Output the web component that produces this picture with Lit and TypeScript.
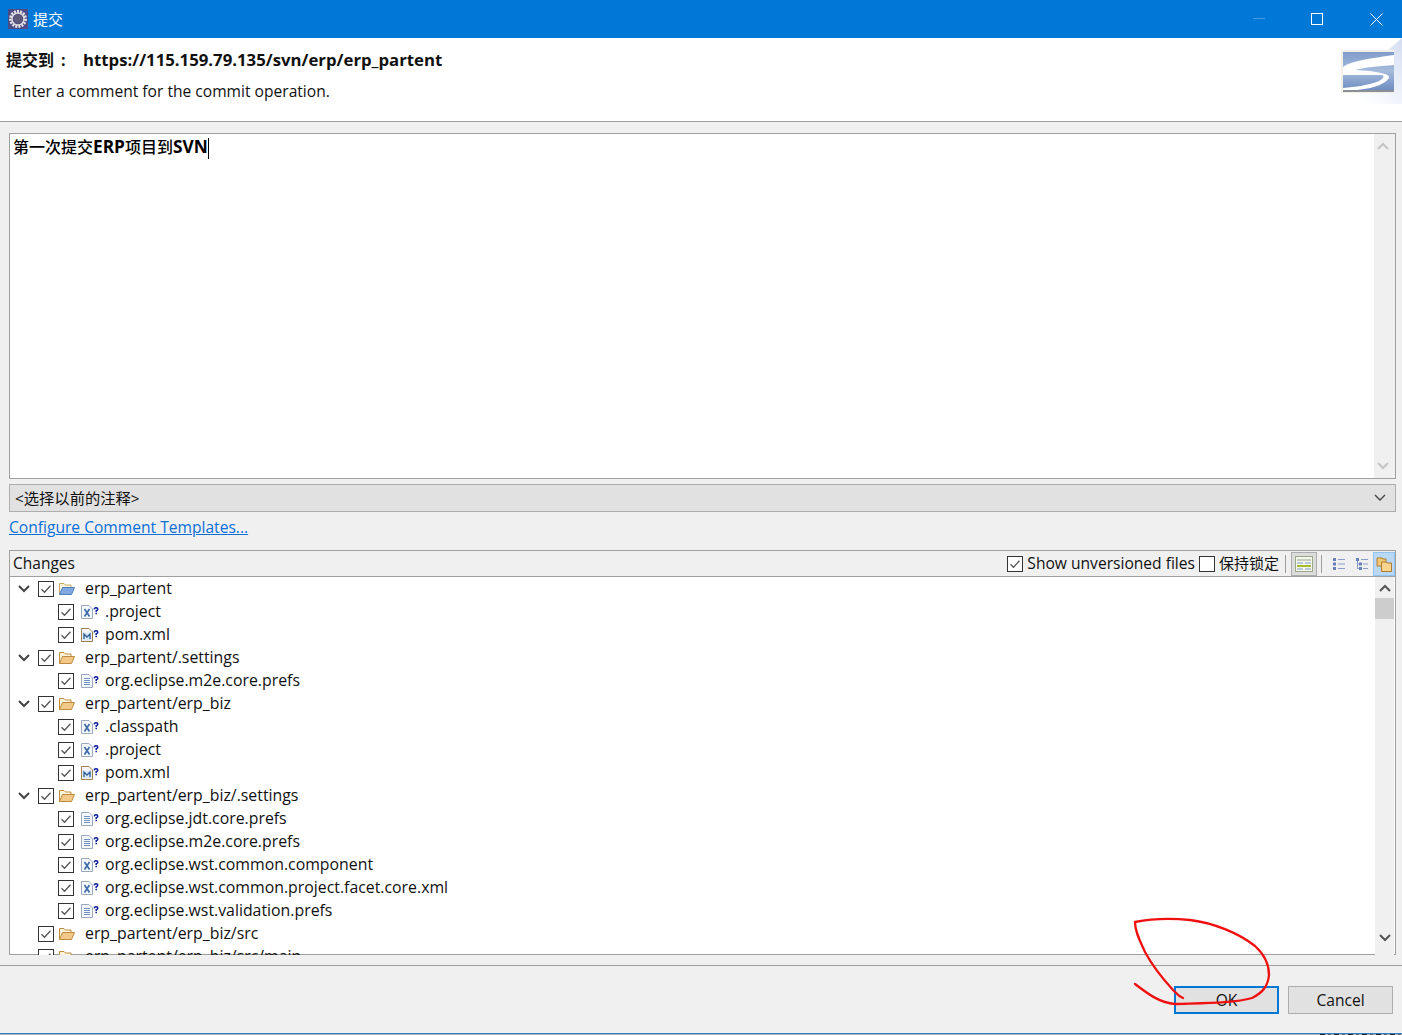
import { LitElement, html, css, svg } from 'lit';
import { customElement } from 'lit/decorators.js';

type Row = { name: string; kind: 'folder' | 'root' | 'x' | 'm' | 'doc'; open?: boolean };

const rows: Row[] = [
  { name: 'erp_partent', kind: 'root', open: true },
  { name: '.project', kind: 'x' },
  { name: 'pom.xml', kind: 'm' },
  { name: 'erp_partent/.settings', kind: 'folder', open: true },
  { name: 'org.eclipse.m2e.core.prefs', kind: 'doc' },
  { name: 'erp_partent/erp_biz', kind: 'folder', open: true },
  { name: '.classpath', kind: 'x' },
  { name: '.project', kind: 'x' },
  { name: 'pom.xml', kind: 'm' },
  { name: 'erp_partent/erp_biz/.settings', kind: 'folder', open: true },
  { name: 'org.eclipse.jdt.core.prefs', kind: 'doc' },
  { name: 'org.eclipse.m2e.core.prefs', kind: 'doc' },
  { name: 'org.eclipse.wst.common.component', kind: 'x' },
  { name: 'org.eclipse.wst.common.project.facet.core.xml', kind: 'x' },
  { name: 'org.eclipse.wst.validation.prefs', kind: 'doc' },
  { name: 'erp_partent/erp_biz/src', kind: 'folder' },
  { name: 'erp_partent/erp_biz/src/main', kind: 'folder' },
];

const checkbox = (checked = true) => html`
  <svg class="check" width="16" height="16" viewBox="0 0 16 16">
    <rect x="0.5" y="0.5" width="15" height="15" fill="#fff" stroke="#333" />
    ${checked ? svg`<path d="M3.5 8.2 L6.5 11.2 L12.5 4.8" fill="none" stroke="#555" stroke-width="1.3" />` : ''}
  </svg>
`;

const chevron = (up: boolean, color: string, weight = 2) => html`
  <svg width="12" height="8" viewBox="0 0 12 8">
    <path d=${up ? 'M1 7 L6 2 L11 7' : 'M1 1 L6 6 L11 1'} fill="none" stroke=${color} stroke-width=${weight} />
  </svg>
`;

const folderIcon = (blue: boolean) => {
  const edge = blue ? '#4f7fc0' : '#c08a3e';
  const front = blue ? '#7fa8e0' : '#f3c98a';
  return html`
    <svg width="18" height="14" viewBox="0 0 18 14">
      <path d="M1.5 12.5 V1.5 H6 L7.5 3 H13 V5.5" fill="#fdf3d8" stroke=${blue ? '#c8a860' : edge} />
      <path d="M1.5 12.5 L4.5 5.5 H16.5 L13.5 12.5 Z" fill=${front} stroke=${edge} />
    </svg>
  `;
};

const fileIcon = (kind: string) => {
  const edge = kind === 'm' ? '#a08050' : '#9aa8c0';
  let inner = svg`
    <path d="M3 4.5 H9 M3 6.5 H9 M3 8.5 H9 M3 10.5 H9" stroke="#6f8fc0" />
  `;
  if (kind === 'x') {
    inner = svg`<path d="M3.5 4 L8.5 11.5 M8.5 4 L3.5 11.5" stroke="#3f6ea8" stroke-width="1.7" />`;
  }
  if (kind === 'm') {
    inner = svg`
      <rect x="1.5" y="4.5" width="9" height="8" fill="#d8e6f5" />
      <path d="M3 11 V6 L6 9 L9 6 V11" fill="none" stroke="#2f5f98" stroke-width="1.3" />
    `;
  }
  return html`
    <svg width="18" height="14" viewBox="0 0 18 14">
      <path d="M0.5 0.5 H8 L11.5 4 V13.5 H0.5 Z" fill="#f4f7fb" stroke=${edge} />
      ${inner}
      <path d="M13.2 4.4 Q13.4 2.8 15 2.8 Q16.8 2.8 16.8 4.2 Q16.8 5.2 15.2 5.8 V7 M15.2 7.8 V9.2" fill="none" stroke="#0a1a9c" stroke-width="1.5" />
    </svg>
  `;
};

@customElement('lit-gear')
class LitGear extends LitElement {
  static styles = css`
    :host { display: block; width: 20px; height: 20px; }
  `;
  render() {
    return html`
      <svg width="20" height="20" viewBox="0 0 20 20">
        <rect width="20" height="20" fill="#4a4a86" />
        <circle cx="10" cy="10" r="7.5" fill="none" stroke="#e6e4e4" stroke-width="3" stroke-dasharray="2 1.1" />
        <circle cx="10" cy="10" r="6" fill="none" stroke="#dcdada" stroke-width="1.5" />
        <circle cx="10" cy="10" r="4.4" fill="#5c5a78" />
      </svg>
    `;
  }
}

@customElement('app-root')
export class AppRoot extends LitElement {
  static styles = css`
    :host {
      display: block;
      position: relative;
      width: 1402px;
      height: 1035px;
      overflow: hidden;
      background: #f0f0f0;
      font-family: "Open Sans", "Noto Sans CJK SC", sans-serif;
      font-size: 15.6px;
      color: #111;
    }
    .titlebar {
      display: flex;
      align-items: center;
      height: 38px;
      padding-left: 8px;
      background: #0078d7;
      color: #fff;
      box-sizing: border-box;
    }
    .titlebar .name {
      margin-left: 5px;
      margin-bottom: 2px;
      font-size: 15px;
      flex: 1;
    }
    .winbtn {
      display: flex;
      align-items: center;
      justify-content: center;
      height: 38px;
    }
    .winbtn.min { width: 50px; }
    .winbtn.max { width: 66px; }
    .winbtn.last { width: 52px; }
    .header {
      display: flex;
      justify-content: space-between;
      height: 83px;
      background: #fff;
      border-bottom: 1px solid #a0a0a0;
    }
    .head-text { padding: 9px 0 0 6px; }
    .head-title {
      display: flex;
      font-weight: 700;
      font-size: 16.75px;
      line-height: 26px;
    }
    .head-title .label { width: 77px; font-size: 16px; }
    .head-title .colon { margin-left: 7px; }
    .head-sub {
      margin-left: 7px;
      margin-top: 7px;
      line-height: 22px;
    }
    .body {
      display: flex;
      flex-direction: column;
      padding: 11px 6px 0 9px;
    }
    .comment {
      display: flex;
      height: 346px;
      box-sizing: border-box;
      background: #fff;
      border: 1px solid #a0a0a0;
    }
    .comment-text {
      flex: 1;
      display: flex;
      align-items: flex-start;
      padding: 2px 0 0 3px;
      font-size: 16px;
      font-weight: 500;
      line-height: 22px;
      color: #000;
    }
    .comment-text b { font-weight: 700; font-size: 17.3px; }
    .caret {
      width: 1px;
      height: 21px;
      margin-top: 2px;
      background: #000;
    }
    .vbar {
      display: flex;
      flex-direction: column;
      justify-content: space-between;
      align-items: center;
      width: 21px;
      padding: 8px 3px 8px 0;
      box-sizing: border-box;
      background: #f0f0f0;
    }
    .combo {
      display: flex;
      align-items: center;
      justify-content: space-between;
      height: 28px;
      margin-top: 5px;
      padding: 0 9px 0 5px;
      box-sizing: border-box;
      background: #e1e1e1;
      border: 1px solid #adadad;
    }
    .combo span { font-size: 15.3px; margin-bottom: 2px; }
    .link {
      display: block;
      height: 38px;
      line-height: 30px;
      color: #0a6fd8;
      text-decoration: underline;
    }
    .changes {
      height: 405px;
      box-sizing: border-box;
      background: #fff;
      border: 1px solid #a0a0a0;
    }
    .toolbar {
      display: flex;
      align-items: center;
      height: 25px;
      padding-left: 3px;
      background: #f0f0f0;
      border-bottom: 1px solid #a0a0a0;
    }
    .toolbar .title { flex: 1; font-size: 15.5px; margin-bottom: 2px; }
    .opt { display: flex; align-items: center; gap: 4px; margin-right: 4px; }
    .opt span { margin-bottom: 2px; }
    .opt .cjk { font-size: 15px; }
    .sep { width: 1px; height: 18px; background: #a0a0a0; margin: 0 5px 0 1px; }
    .sep.first { margin-left: 2px; }
    .tool {
      display: flex;
      align-items: center;
      justify-content: center;
      height: 24px;
      box-sizing: border-box;
    }
    .tool.pressed { width: 26px; background: #dcdcdc; border: 1px solid #adadad; margin-right: 3px; }
    .tool.plain { width: 23px; }
    .tool.active { width: 22px; background: #b8d8f6; border: 1px solid #92c4ee; margin-right: 0; }
    .tree-wrap { display: flex; height: 378px; }
    .tree { flex: 1; overflow: hidden; font-size: 15.85px; }
    .row {
      display: flex;
      align-items: center;
      height: 23px;
      white-space: nowrap;
    }
    .row .label { margin-bottom: 2px; }
    .row.top { padding-left: 8px; }
    .row.child { padding-left: 48px; }
    .chev { display: flex; width: 12px; margin-right: 8px; }
    .row.top .icon { margin-left: 4px; margin-right: 9px; display: flex; }
    .row.child .icon { margin-left: 7px; margin-right: 6px; display: flex; }
    .tree-bar {
      display: flex;
      flex-direction: column;
      align-items: center;
      width: 19px;
      margin-right: 1px;
      background: #f0f0f0;
    }
    .tree-bar .up { padding-top: 7px; height: 21px; box-sizing: border-box; display: flex; }
    .tree-bar .thumb { width: 100%; height: 21px; background: #cdcdcd; }
    .tree-bar .down { margin-top: auto; height: 21px; display: flex; }
    .footer {
      display: flex;
      justify-content: flex-end;
      gap: 9px;
      height: 68px;
      margin-top: 10px;
      padding: 20px 9px 0 0;
      box-sizing: border-box;
      border-top: 1px solid #a0a0a0;
    }
    .btn {
      width: 105px;
      height: 28px;
      box-sizing: border-box;
      display: flex;
      align-items: center;
      justify-content: center;
      background: #e1e1e1;
      border: 1px solid #adadad;
    }
    .btn.default { border: 2px solid #0078d7; }
    .edge {
      display: flex;
      justify-content: flex-end;
      height: 1px;
      background: #a9b4bf;
      border-top: 1px solid #2f7fc8;
    }
    .edge span {
      width: 82px;
      height: 1px;
      background: repeating-linear-gradient(90deg, #20242a 0 5px, #a9b4bf 5px 8px, #5c6670 8px 11px, #a9b4bf 11px 14px);
    }
    .ink {
      position: absolute;
      left: 0;
      top: 0;
      pointer-events: none;
    }
  `;

  private tree() {
    return rows.map((r) => {
      const isFolder = r.kind === 'folder' || r.kind === 'root';
      return html`
        <div class="row ${isFolder ? 'top' : 'child'}">
          ${isFolder
            ? html`<span class="chev">${r.open ? chevron(false, '#444') : ''}</span>`
            : ''}
          ${checkbox()}
          <span class="icon">
            ${isFolder ? folderIcon(r.kind === 'root') : fileIcon(r.kind)}
          </span>
          <span class="label">${r.name}</span>
        </div>
      `;
    });
  }

  render() {
    return html`
      <div class="titlebar">
        <lit-gear></lit-gear>
        <span class="name">提交</span>
        <span class="winbtn min">
          <svg width="12" height="2"><rect width="12" height="1" y="0" fill="#3d97e2" /></svg>
        </span>
        <span class="winbtn max">
          <svg width="12" height="12"><rect x="0.5" y="0.5" width="11" height="11" fill="none" stroke="#fff" /></svg>
        </span>
        <span class="winbtn last">
          <svg width="13" height="13"><path d="M0.5 0.5 L12.5 12.5 M12.5 0.5 L0.5 12.5" stroke="#fff" /></svg>
        </span>
      </div>

      <div class="header">
        <div class="head-text">
          <div class="head-title">
            <span class="label">提交到<span class="colon">:</span></span>
            <span>https://115.159.79.135/svn/erp/erp_partent</span>
          </div>
          <div class="head-sub">Enter a comment for the commit operation.</div>
        </div>
        <svg width="75" height="66" viewBox="0 0 75 66">
          <defs>
            <linearGradient id="wash" x1="0" y1="1" x2="1" y2="0">
              <stop offset="0.25" stop-color="#fff" />
              <stop offset="1" stop-color="#d4def2" />
            </linearGradient>
            <linearGradient id="plate" x1="0" y1="0" x2="0" y2="1">
              <stop offset="0" stop-color="#7f9ccb" />
              <stop offset="0.5" stop-color="#a6bbdc" />
              <stop offset="1" stop-color="#6f8dc0" />
            </linearGradient>
          </defs>
          <path d="M75 0 V66 H0 Z" fill="url(#wash)" />
          <rect x="14" y="12" width="53" height="43" fill="#f1efe6" />
          <rect x="16" y="14" width="51" height="38" fill="url(#plate)" />
          <path d="M67 17 C48 20 26 22 16 29 V37 H55 C58 38 56 41 52 43 C42 47 28 49 16 50 V53 C35 52 55 50 62 40 C64 36 50 33 28 32 C40 29 55 28 67 27 Z" fill="#fff" />
          <rect x="16" y="52" width="51" height="2" fill="#8a8f98" />
        </svg>
      </div>

      <div class="body">
        <div class="comment">
          <div class="comment-text">
            <span>第一次提交<b>ERP</b>项目到<b>SVN</b></span><span class="caret"></span>
          </div>
          <div class="vbar">
            ${chevron(true, '#c4c4c4')} ${chevron(false, '#c4c4c4')}
          </div>
        </div>

        <div class="combo">
          <span>&lt;选择以前的注释&gt;</span>
          ${chevron(false, '#444', 1.4)}
        </div>
        <a class="link">Configure Comment Templates...</a>

        <div class="changes">
          <div class="toolbar">
            <span class="title">Changes</span>
            <label class="opt">${checkbox()}<span>Show unversioned files</span></label>
            <label class="opt">${checkbox(false)}<span class="cjk">保持锁定</span></label>
            <span class="sep first"></span>
            <span class="tool pressed">
              <svg width="18" height="16" viewBox="0 0 18 16">
                <rect x="0.5" y="0.5" width="17" height="15" fill="#f4f6ee" stroke="#9aa88a" />
                <path d="M2 4 H16" stroke="#9aa88a" />
                <path d="M2 7 H8 M10 7 H16 M2 13 H8 M10 13 H16" stroke="#7f9fc4" />
                <rect x="2" y="9" width="14" height="2" fill="#a4bc30" />
              </svg>
            </span>
            <span class="sep"></span>
            <span class="tool plain">
              <svg width="12" height="12" viewBox="0 0 12 12">
                <path d="M0 0 H3 V3 H0 Z M0 4.5 H3 V7.5 H0 Z M0 9 H3 V12 H0 Z" fill="#6a80b8" />
                <path d="M5 1.5 H12 M5 6 H12 M5 10.5 H12" stroke="#8a9cc8" />
              </svg>
            </span>
            <span class="tool plain">
              <svg width="12" height="12" viewBox="0 0 12 12">
                <path d="M0 0 H3 V3 H0 Z M3 4.5 H6 V7.5 H3 Z M3 9 H6 V12 H3 Z" fill="#6a80b8" />
                <path d="M1.5 3 V10.5 H3 M1.5 6 H3 M5 1.5 H12 M7 6 H12 M7 10.5 H12" fill="none" stroke="#8a9cc8" />
              </svg>
            </span>
            <span class="tool active">
              <svg width="16" height="16" viewBox="0 0 16 16">
                <path d="M1 2 H6 L7 3 H10 V10 H1 Z" fill="#f5c878" stroke="#b07c30" />
                <path d="M5.5 6 H10 L11 7 H15.5 V15.5 H5.5 Z" fill="#fbd590" stroke="#b07c30" />
              </svg>
            </span>
          </div>
          <div class="tree-wrap">
            <div class="tree">${this.tree()}</div>
            <div class="tree-bar">
              <span class="up">${chevron(true, '#555')}</span>
              <span class="thumb"></span>
              <span class="down">${chevron(false, '#555')}</span>
            </div>
          </div>
        </div>
      </div>

      <div class="footer">
        <div class="btn default">OK</div>
        <div class="btn">Cancel</div>
      </div>
      <div class="edge"><span></span></div>

      <svg class="ink" width="1402" height="1035" viewBox="0 0 1402 1035">
        <path
          d="M1183 998 C1178 996 1176 993 1173 990 C1162 978 1152 965 1145 952 C1140 941 1135 932 1135 922
             C1150 919 1170 918 1190 920 C1215 923 1240 934 1255 946 C1265 955 1269 965 1269 975
             C1268 985 1264 992 1252 998 C1235 1003 1205 1003 1175 1004 C1160 1003 1148 994 1135 984"
          fill="none"
          stroke="#f01010"
          stroke-width="2.3"
          stroke-linecap="round"
        />
      </svg>
    `;
  }
}
